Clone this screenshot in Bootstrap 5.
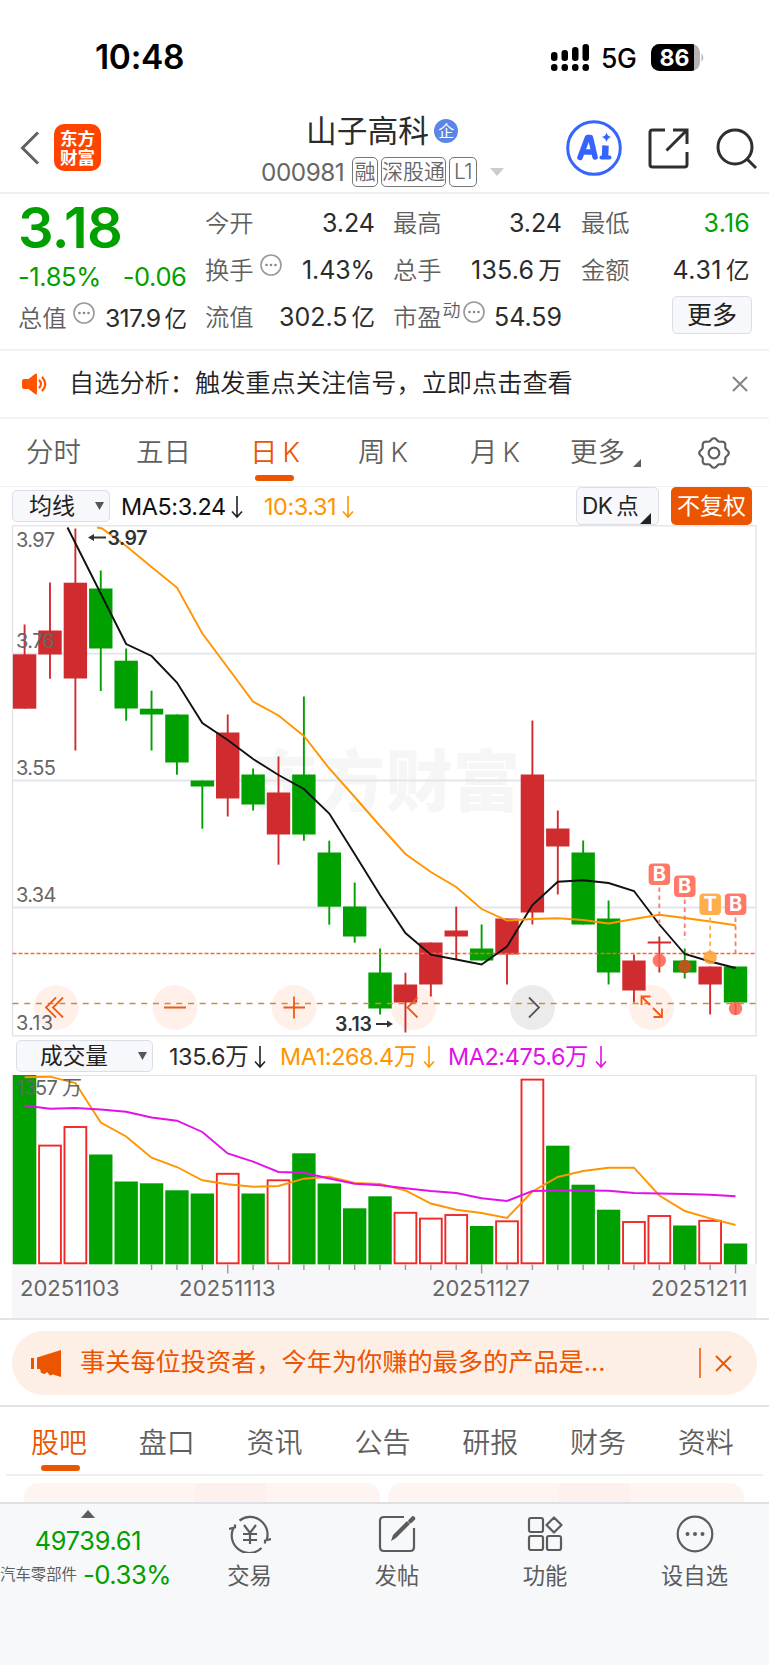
<!DOCTYPE html>
<html lang="zh-CN">
<head>
<meta charset="utf-8">
<meta name="viewport" content="width=device-width, initial-scale=1">
<title>山子高科 000981</title>
<link rel="stylesheet" href="https://cdn.jsdelivr.net/npm/bootstrap@5.3.0/dist/css/bootstrap.min.css">
<style>
:root{--up:#d02c2f;--down:#00a000;--brand:#eb5500;--ink:#2b2b2b;--dim:#5f5f5f;--soft:#f7f8fb;--edge:#e3e4e9}
body{font-family:Inter,"Noto Sans CJK SC",sans-serif;color:var(--ink);background:#fff;width:769px;height:1665px;overflow:hidden;font-size:25px;line-height:1;font-weight:400}
svg{display:block;flex:none}
.cells{display:grid;align-items:center;white-space:nowrap}
.down{color:var(--down)}
.dim{color:var(--dim)}
.thin{font-weight:350}
.status-row{height:108px;grid-template-columns:95px 455px 52px 48px 60px;font-weight:600;color:#000}
.clock{font-size:33.5px;letter-spacing:-.3px}
.head-row{height:84px;grid-template-columns:20px 34px 207px 305px 82px 68px 50px}
.logo-box{width:47px;height:47px;border-radius:10px;background:#ff4400;color:#fff;font-size:17.5px;line-height:19px;font-weight:700}
.stock-name{font-size:30.7px;letter-spacing:.1px}
.qi{width:24px;height:24px;background:#5b86e5;color:#fff;font-size:16px;margin-left:5px}
.code-no{font-size:24.3px;letter-spacing:-.45px;width:91px;color:#666}
.tag-box{border:1.5px solid #777;border-radius:5px;height:30px;font-size:21px;color:#666;font-weight:350}
.quote{height:159px;border-top:2px solid #eee;border-bottom:2px solid #f1f1f1;grid-template-columns:18px 187px 188px 188px 169px}
.price{font-size:56px;font-weight:600;letter-spacing:-.7px;line-height:50px}
.quote-col{height:156px;padding-top:6px}
.quote-col>div{height:47px}
.lbl{color:var(--dim);font-size:24.3px;font-weight:350}
.soft-btn{background:var(--soft);border:1.5px solid #dcdee6;border-radius:5px;color:#222}
.notice{height:68px;border-bottom:2px solid #f4f4f4;grid-template-columns:22px 47px 663px 30px}
.k-tabs{height:68px;border-bottom:1.5px solid #f1f1f1;grid-template-columns:26px 110px 114px 108px 112px 100px 127px 32px;font-size:27.5px;color:var(--dim);font-weight:350}
.k-tabs span span{margin-left:5px;font-size:27px}
.k-tabs .on,.sub-tabs .on{color:var(--brand);position:relative}
.k-tabs .on::after,.sub-tabs .on::after{content:"";position:absolute;width:39px;height:6.5px;border-radius:3.5px;background:var(--brand)}
.k-tabs .on::after{left:5px;top:36px}
.sub-tabs .on::after{left:10px;top:36px}
.ma-row{height:38px;grid-template-columns:12px 109px 143px 312px 95px 82px;font-size:24px}
.fs23{font-size:23.4px;letter-spacing:-.4px}
.vol-row{height:38px;grid-template-columns:16px 153px 111px 168px 200px;padding-top:1px}
.orange{color:#ff9500}.pink{color:#e012e8}
.banner-wrap{height:89px;border-bottom:2px solid var(--edge);border-top:2px solid var(--edge);padding:11px 12px}
.banner{height:64px;border-radius:32px;background:#fdeee6;color:var(--brand);grid-template-columns:19px 49px 619px 16px 24px;font-size:25.2px}
.sub-tabs{height:69px;margin:0 6px;padding-top:4px;border-bottom:2px solid #efefef;grid-template-columns:25px repeat(6,107.8px) 60px;font-size:28px;color:var(--dim);font-weight:350}
.peek{height:26px;padding:7px 25px 0 24px;gap:8px}
.peek>div{flex:1;border-radius:14px 14px 0 0;background:linear-gradient(90deg,#fef5f2 48%,#fdf0ed 48% 68%,#fef4f1 68%)}
.dock{background:#f7f8fa;height:163px;border-top:2px solid #dfe0e4;grid-template-columns:176px 147px 148px 148px 151px;align-items:start}
.dock .item{padding-top:11px;gap:12px;font-size:22.3px;color:#5c5c5c}
</style>
</head>
<body>
<div class="cells status-row">
  <i></i><span class="clock" style="padding-top:7px">10:48</span>
  <svg width="40" height="28" style="margin-top:8px"><g><rect x="1" y="8" width="6.5" height="9" rx="3"/><rect x="11.5" y="6" width="6.5" height="11" rx="3"/><rect x="22" y="3" width="6.5" height="14" rx="3"/><rect x="32.5" y="0" width="6.5" height="17" rx="3"/><rect x="1" y="20" width="6.5" height="7" rx="3"/><rect x="11.5" y="20" width="6.5" height="7" rx="3"/><rect x="22" y="20" width="6.5" height="7" rx="3"/><rect x="32.5" y="20" width="6.5" height="7" rx="3"/></g></svg>
  <span style="font-size:26.5px;font-weight:450;padding-top:9px;letter-spacing:-.3px;margin-left:-1px">5G</span>
  <svg width="56" height="29" style="margin-top:6px"><defs><clipPath id="bat"><rect x="1" y="1" width="49" height="27" rx="8.5"/></clipPath></defs><g clip-path="url(#bat)"><rect width="56" height="29" fill="#b4b4b4"/><rect width="44" height="29"/></g><path d="M51.500 10q3.500 4.500 0 9z" fill="#b4b4b4"/><text x="24.500" y="22.800" fill="#fff" font-size="23" font-weight="700" text-anchor="middle" textLength="30">86</text></svg>
</div>

<div class="cells head-row">
  <i></i>
  <svg width="20" height="36" style="margin-top:-5px"><path d="M18 2.500L2.500 18 18 33.500" fill="none" stroke="#606060" stroke-width="3"/></svg>
  <div class="logo-box d-flex flex-column align-items-center justify-content-center" style="margin-top:-5px"><span>东方</span><span>财富</span></div>
  <div style="padding-top:3px">
    <div class="d-flex align-items-center" style="margin:0 0 10px 45px"><span class="stock-name">山子高科</span><span class="qi rounded-circle d-flex align-items-center justify-content-center">企</span></div>
    <div class="d-flex align-items-center"><span class="code-no">000981</span>
      <span class="tag-box d-flex align-items-center justify-content-center" style="width:26px">融</span>
      <span class="tag-box d-flex align-items-center justify-content-center" style="width:65px;margin-left:3px">深股通</span>
      <span class="tag-box d-flex align-items-center justify-content-center" style="width:28px;margin-left:3px;letter-spacing:-.6px">L1</span>
      <svg width="14" height="8" style="margin-left:13px"><path d="M0 0h14l-7 8z" fill="#ccc"/></svg></div>
  </div>
  <svg width="56" height="56" style="margin-top:-4px"><circle cx="28" cy="28" r="26.300" fill="#fff" stroke="#3564ff" stroke-width="3"/><path d="M14 37.500L21.500 17.500h3L29 37M17 32h10" fill="none" stroke="#3564ff" stroke-width="5.500" stroke-linejoin="round" stroke-linecap="round"/><path d="M39.500 25.500l-.5 12" stroke="#3564ff" stroke-width="6.500" stroke-linecap="butt"/><path d="M35.500 37.500h8" stroke="#3564ff" stroke-width="4" stroke-linecap="round"/><path d="M40.500 12.500q1 4 5 4.500-4 .8-5 5-1-4.200-5-5 4-.5 5-4.500z" fill="#3564ff"/></svg>
  <svg width="41" height="41" style="margin-top:-4px" fill="none" stroke="#2f2f2f" stroke-width="3"><path d="M17 2H4.500Q2 2 2 4.500v32Q2 39 4.500 39h32q2.500 0 2.500-2.500V24M18.500 22.500L38 3M25 2h14v14"/></svg>
  <svg width="42" height="42" style="margin-top:-3px" fill="none" stroke="#2f2f2f" stroke-width="3"><circle cx="19" cy="19" r="17"/><path d="M31 31l9 9"/></svg>
</div>

<div class="cells quote">
  <i></i>
  <div class="quote-col" style="width:168.500px">
    <div style="height:59px;padding-top:3px" class="price down">3.18</div>
    <div class="d-flex justify-content-between align-items-center down" style="height:36px;font-size:25.500px;letter-spacing:-.4px"><span>-1.85%</span><span>-0.06</span></div>
    <div class="d-flex align-items-center"><span class="lbl">总值</span><svg width="22" height="22" style="margin:-12px 0 0 6px"><use href="#dots"/></svg><span class="ms-auto" style="font-size:24.800px;letter-spacing:-.6px">317.9<span style="margin-left:4px;font-size:22.500px">亿</span></span></div>
  </div>
  <div class="quote-col" style="width:170px">
    <div class="d-flex align-items-center"><span class="lbl">今开</span><span class="ms-auto">3.24</span></div>
    <div class="d-flex align-items-center"><span class="lbl">换手</span><svg width="22" height="22" style="margin:-12px 0 0 6px"><use href="#dots"/></svg><span class="ms-auto" style="letter-spacing:-.1px">1.43%</span></div>
    <div class="d-flex align-items-center"><span class="lbl">流值</span><span class="ms-auto">302.5<span style="margin-left:4px;font-size:23.500px">亿</span></span></div>
  </div>
  <div class="quote-col" style="width:169px">
    <div class="d-flex align-items-center"><span class="lbl">最高</span><span class="ms-auto">3.24</span></div>
    <div class="d-flex align-items-center"><span class="lbl">总手</span><span class="ms-auto" style="letter-spacing:.2px">135.6<span style="margin-left:4px;font-size:23.500px">万</span></span></div>
    <div class="d-flex align-items-center"><span class="lbl">市盈</span><span class="lbl" style="font-size:18px;margin:-14px 0 0 1px">动</span><svg width="22" height="22" style="margin:-12px 0 0 2px"><use href="#dots"/></svg><span class="ms-auto">54.59</span></div>
  </div>
  <div class="quote-col" style="width:169px">
    <div class="d-flex align-items-center"><span class="lbl">最低</span><span class="ms-auto down" style="letter-spacing:.2px">3.16</span></div>
    <div class="d-flex align-items-center"><span class="lbl">金额</span><span class="ms-auto" style="letter-spacing:.5px">4.31<span style="margin-left:4px;font-size:23.500px">亿</span></span></div>
    <div class="d-flex align-items-center justify-content-end"><span class="soft-btn d-flex align-items-center justify-content-center" style="width:80px;height:38px;margin:-5px -2px 0 0">更多</span></div>
  </div>
</div>

<div class="cells notice">
  <i></i>
  <svg width="26" height="22"><path d="M0 8q0-2 2-2h4.500L13 1q2-1.500 2 1v18q0 2.500-2 1l-6.500-5H2q-2 0-2-2z" fill="#ff5500"/><path d="M17.500 7.500q3 3.500 0 7M20.500 4.500q5.500 6.500 0 13" fill="none" stroke="#ff5500" stroke-width="2.200" stroke-linecap="round"/></svg>
  <span class="thin" style="font-size:25.200px;color:#222">自选分析：触发重点关注信号，立即点击查看</span>
  <svg width="16" height="16"><path d="M1 1l14 14M15 1L1 15" stroke="#888" stroke-width="2.200"/></svg>
</div>

<nav class="cells k-tabs">
  <i></i><span>分时</span><span>五日</span><span class="on">日<span>K</span></span><span>周<span>K</span></span><span>月<span>K</span></span>
  <span class="d-flex align-items-end">更多<svg width="8" height="8" style="margin:0 0 -1px 8px"><path d="M8 0v8H0z" fill="#5f5f5f"/></svg></span>
  <svg width="32" height="32" viewBox="-16 -16 32 32" fill="none" stroke="#5f5f5f" stroke-width="2.200" style="margin-left:1px"><circle r="5.300"/><path id="cog" stroke-linejoin="round"/></svg>
</nav>

<div class="cells ma-row">
  <i></i><span class="soft-btn d-flex align-items-center" style="width:98px;height:32px;padding-left:16px;font-size:23px">均线<svg width="9" height="8" style="margin-left:20px"><path d="M0 0h9L4.500 8z" fill="#555"/></svg></span>
  <span class="d-flex align-items-center" style="color:#111;padding-top:2px"><span class="fs23" style="width:110px">MA5:3.24</span><svg width="12" height="24"><use href="#arr" stroke="#222"/></svg></span>
  <span class="d-flex align-items-center orange" style="padding-top:2px"><span class="fs23" style="width:78px">10:3.31</span><svg width="12" height="24"><use href="#arr" stroke="#ff9500"/></svg></span>
  <span class="soft-btn d-flex align-items-center" style="width:83px;height:38px;padding-left:5px;font-size:22.500px;letter-spacing:-.6px">DK<span style="margin-left:4px">点</span><svg width="11" height="11" style="margin:24px 0 0 2px"><path d="M11 0v11H0z" fill="#222"/></svg></span>
  <span class="d-flex align-items-center justify-content-center text-white" style="width:81px;height:38px;border-radius:5px;background:var(--brand);font-size:23px">不复权</span>
</div>

<svg id="kline" width="769" height="512" viewBox="0 525 769 512"></svg>

<div class="cells vol-row">
  <i></i><span class="soft-btn d-flex align-items-center" style="width:137px;height:32px;padding-left:23px;font-size:22.700px;margin-top:-1px">成交量<svg width="9" height="8" style="margin-left:30px"><path d="M0 0h9L4.500 8z" fill="#555"/></svg></span>
  <span class="d-flex align-items-center"><span class="fs23" style="width:85px">135.6万</span><svg width="12" height="24"><use href="#arr" stroke="#222"/></svg></span>
  <span class="d-flex align-items-center orange"><span class="fs23" style="width:143px">MA1:268.4万</span><svg width="12" height="24"><use href="#arr" stroke="#ff9500"/></svg></span>
  <span class="d-flex align-items-center pink"><span class="fs23" style="width:147px">MA2:475.6万</span><svg width="12" height="24"><use href="#arr" stroke="#e012e8"/></svg></span>
</div>

<svg id="volume" width="769" height="243" viewBox="0 1075 769 243"></svg>

<div class="banner-wrap">
  <div class="cells banner">
    <i></i>
    <svg width="31" height="27" fill="#eb5500"><path d="M0 8h3v11H0zM6 7.500L30 0v27l-8-2.500-3 1-3-3.500-2 2-4-1-1-4H6z"/></svg>
    <span>事关每位投资者，今年为你赚的最多的产品是...</span>
    <svg width="2" height="30"><path d="M1 0v30" stroke="#eb5500" stroke-width="1.500"/></svg>
    <svg width="17" height="17"><path d="M1 1l15 15M16 1L1 16" stroke="#eb5500" stroke-width="1.800"/></svg>
  </div>
</div>

<nav class="cells sub-tabs"><i></i><span class="on">股吧</span><span>盘口</span><span>资讯</span><span>公告</span><span>研报</span><span>财务</span><span>资料</span></nav>
<div class="d-flex peek"><div></div><div></div></div>

<footer class="cells dock">
  <div class="d-flex flex-column align-items-center down">
    <svg width="14" height="8" style="margin-top:6px"><path d="M0 8h14L7 0z" fill="#5c5c5c"/></svg>
    <span style="font-size:25.300px;letter-spacing:-.3px;margin-top:10px">49739.61</span>
    <div class="d-flex align-items-center align-self-start" style="margin:9px 0 0 0"><span class="dim" style="font-size:15.400px;width:83px">汽车零部件</span><span style="font-size:25.700px;letter-spacing:-.5px">-0.33%</span></div>
  </div>
  <div class="item d-flex flex-column align-items-center"><svg width="42" height="38" fill="none" stroke="#5c5c5c" stroke-width="2.200"><path d="M10.500 5.500A17.500 17.500 0 0 1 37.800 24.500M36 28.500V25.500l6-1.500M32.500 33A17.500 17.500 0 0 1 4.200 13.500M6 9.500V12.500L0 14"/><path d="M15 10l6 8 6-8M14 19h14M14 25h14M21 18v11"/></svg><span>交易</span></div>
  <div class="item d-flex flex-column align-items-center"><svg width="38" height="38" fill="none" stroke="#5c5c5c" stroke-width="2.200"><path d="M26 2H6Q2 2 2 6v26q0 4 4 4h26q4 0 4-4V13"/><path d="M15 20L29 6l3 3-14 14-5 3z" fill="#5c5c5c" stroke="none"/><path d="M32.500 6l2.500-2.500" stroke-width="4.500" stroke-linecap="round"/></svg><span>发帖</span></div>
  <div class="item d-flex flex-column align-items-center"><svg width="36" height="38" fill="none" stroke="#5c5c5c" stroke-width="2.200"><rect x="2" y="3" width="14" height="14" rx="2"/><rect x="2" y="21" width="14" height="14" rx="2"/><rect x="20" y="21" width="14" height="14" rx="2"/><path d="M27 2.500l7.500 7.500-7.500 7.500-7.500-7.500z" stroke-linejoin="round"/></svg><span>功能</span></div>
  <div class="item d-flex flex-column align-items-center"><svg width="38" height="38"><circle cx="19" cy="19" r="17.300" fill="none" stroke="#5c5c5c" stroke-width="2.200"/><g fill="#5c5c5c"><circle cx="11.500" cy="19" r="2"/><circle cx="19" cy="19" r="2"/><circle cx="26.500" cy="19" r="2"/></g></svg><span>设自选</span></div>
</footer>

<svg width="0" height="0" class="position-absolute"><defs>
  <g id="dots"><circle cx="11" cy="11" r="10" fill="none" stroke="#999" stroke-width="1.600"/><g fill="#888"><circle cx="6.500" cy="11" r="1.300"/><circle cx="11" cy="11" r="1.300"/><circle cx="15.500" cy="11" r="1.300"/></g></g>
  <path id="arr" d="M6 1v21M1 16.500l5 5.500 5-5.500" fill="none" stroke-width="1.600"/>
</defs></svg>

<script src="https://cdn.jsdelivr.net/npm/bootstrap@5.3.0/dist/js/bootstrap.bundle.min.js"></script>
<script>
// Column i is centred on cx(i); values below are plot-space y coordinates.
const cx = i => 24.6 + 25.39 * i, RED = '#d02c2f', GREEN = '#00a000';
// [colour, high, body top, body bottom, low]
const candles = [['r',624.5,654.3,708.7,708.7],['r',582.5,630.5,654.5,678.7],['r',528.5,582.7,678.5,750.5],['g',570.5,588.5,648.5,691],['g',648.5,660.7,708.5,720.7],['g',690.7,708.7,714.5,750.5],['g',714.5,714.5,762.5,774.7],['g',780.5,780.5,786.5,828.7],['r',714.5,732.5,798.5,816.5],['g',768.5,774.5,804.5,810.5],['r',756.5,792.5,834.5,864.7],['g',696.5,774.5,834.5,840.7],['g',840.7,852.5,906.7,924.7],['g',882.5,906.5,936.5,942.7],['g',948.5,972.5,1008.5,1014.5],['r',972.7,984.5,1002.5,1032.5],['r',942.5,942.5,984.5,996.5],['r',906.7,930.5,936.5,960],['g',924.5,948.5,960.5,960.5],['r',918.5,918.5,954.5,984.5],['r',720.5,774.5,912.5,924.5],['r',810.5,828.5,846.5,894.5],['g',840.5,852.5,924.5,924.5],['g',900.5,918.5,972.5,984.5],['r',954.5,960.5,990.5,1002.5],['r',936.5,941.5,943.5,972.5],['g',948.5,960.5,972.5,978.5],['r',966.5,966.5,984.5,1014.5],['g',966.5,966.5,1002.5,1014.5]];
const ma5 = [644,656,682.5,723,740,759,775,789,813.5,854,895,933,954.7,959.5,964.5,946.5,905,881.7,880.3,883,891,924.5,954,961.5,968];
const ma10 = [546,567,587.5,633.5,667.5,701.7,715.5,736,768.5,797,826,854,872,887,909,920.5,919,918.3,920,923.5,919,914.7,918,921.5,925.3];
const vols = [1074.5,1145.3,1126.7,1154.5,1181.5,1183.3,1190.3,1193.5,1173.5,1193.5,1180,1153.3,1183.5,1208.3,1196.3,1212.5,1218.3,1214.7,1226,1221,1079.3,1145.7,1184.7,1209.7,1221.7,1215.7,1225.5,1220.5,1243.5];
const v1 = [1077.3,1076.7,1083,1122.5,1136.5,1157.7,1167,1180.3,1184.3,1186.7,1186,1178.7,1176.7,1183,1184,1190.5,1203.5,1209.7,1213,1218,1191.5,1177,1171,1167.7,1167.7,1195.5,1211,1218.3,1225];
const v2 = [1105.5,1108.8,1108,1109.5,1111.7,1117.5,1120.7,1132,1153.5,1161.7,1172,1172.7,1178.5,1183.8,1185.3,1188.3,1191,1193,1198.3,1201,1191,1190.5,1190.5,1190.7,1193,1193.5,1194,1194.8,1196.3];
const line = (ys, from, color, lead = '') => `<polyline fill="none" stroke="${color}" stroke-width="1.9" points="${lead} ${ys.map((y, i) => cx(i + from) + ',' + y).join(' ')}"/>`;
const label = (x, y, w, t, extra = '') => `<text x="${x}" y="${y}" textLength="${w}" font-size="20" fill="#666" ${extra}>${t}</text>`;

let k = `<text x="251" y="806" font-size="67" font-weight="900" fill="#f6f6f6" textLength="269">东方财富</text>`;
k += `<g fill="none" stroke="#e1e6eb" stroke-width="1.8"><path d="M12 653.700H756M12 780.500H756M12 907.500H756"/></g><rect x="12.500" y="525.800" width="743.500" height="510" fill="none" stroke="#e2e2e5" stroke-width="1.300"/>`;
[56,175,294,413.5,532.5,651.5].forEach((x, i) => k += `<circle cx="${x}" cy="1007.500" r="22.500" fill="${i == 4 ? '#ebebeb' : '#fff1ea'}"/>`);
candles.forEach(([c, h, a, b, l], i) => { const f = c == 'r' ? RED : GREEN, x = cx(i);
  k += `<path d="M${x} ${h}V${l}" stroke="${f}" stroke-width="1.900"/><rect x="${x - 11.7}" y="${a}" width="23.400" height="${b - a}" fill="${f}"/>`; });
k += `<path d="M12.500 953.500H756" stroke="#f26a30" stroke-width="1.600" stroke-dasharray="4 2"/><path d="M12.500 1003.500H756" stroke="#c98b45" stroke-width="1.700" stroke-dasharray="6 5.700"/>`;
k += line(ma5, 4, '#111', '67.500,527.500') + line(ma10, 4, '#ff9500', '97,527.500 102,528.500');
k += label(16,547,39,'3.97') + label(16,647.500,39,'3.76') + label(16,775,40,'3.55') + label(16,902,40.500,'3.34') + label(16,1029.500,37,'3.13');
k += `<g fill="#333" font-weight="600"><text x="107.500" y="545" font-size="19.500" textLength="40">3.97</text><text x="335" y="1031" font-size="19.500" textLength="37">3.13</text><path d="M88 537.500l6-3.500v2.600h12v1.900H94v2.600zM393 1024l-6-3.500v2.600h-11v1.900h11v2.600z"/></g>`;
k += `<g fill="none" stroke="#f05a14" stroke-width="1.800"><path d="M56 997.500l-10 10 10 10M63 997.500l-10 10 10 10M164 1007.500h22M283.500 1007.500h21.500M294 996.500v22M417.500 997.500l-10 10 10 10"/><path d="M641.500 1005v-8.500h9M641.500 996.500l8.500 8.500M653.500 1017h8.500v-8.500M662 1017l-9-9"/><path d="M529 997.500l10 10-10 10" stroke="#555"/></g>`;
[['B',25,863.5,960.5],['B',26,875.5,966.5],['T',27,893.5,957.5],['B',28,893.5,1008.5]].forEach(([t, i, y, d]) => { const x = cx(i), f = t == 'T' ? '#ffae4c' : '#ff7868', end = {25:926,26:940,27:957,28:957}[i];
  k += `<path d="M${x} ${y + 24}V${end}" stroke="${f}" stroke-width="1.800" stroke-dasharray="4.500 3.500"/><rect x="${x - 10.7}" y="${y}" width="21.500" height="21.500" rx="4" fill="${f}"/><text x="${x}" y="${y + 17.8}" fill="#fff" font-size="20" font-weight="700" text-anchor="middle">${t}</text><circle cx="${x}" cy="${d}" r="6.700" fill="${i == 26 ? '#b35a1c' : t == 'T' ? '#ff9f2f' : '#ff5f50'}" fill-opacity="${i == 26 ? 1 : .85}"/>`; });
document.getElementById('kline').innerHTML = k;

let v = `<rect x="12" y="1264" width="744.500" height="54" fill="#f7f7fa"/><path d="M12.500 1264V1075.200H756V1264" fill="none" stroke="#e2e2e5" stroke-width="1.500"/>`;
vols.forEach((y, i) => { const x = cx(i);
  const hollow = [1,2,8,10,15,16,17,19,20,24,25,27].includes(i);
  v += hollow ? `<rect x="${x - 10.9}" y="${y + .3}" width="21.800" height="${1263 - y}" fill="#fff" stroke="#f02828" stroke-width="1.900"/>` : `<rect x="${x - 11.7}" y="${y}" width="23.400" height="${1264.3 - y}" fill="${GREEN}"/>`;
  if (i > 4) v += `<path d="M${x} 1264.500V${[8,18,28].includes(i) ? 1273.5 : 1270}" stroke="#999" stroke-width="1.400"/>`; });
v += line(v1, 0, '#ff9500') + line(v2, 0, '#e012e8') + label(16,1094.500,66,'1357 万');
[[20,99.5,'20251103'],[179,96.5,'20251113'],[432,98,'20251127'],[651,96.5,'20251211']].forEach(([x, w, t]) => v += `<text x="${x}" y="1295.500" textLength="${w}" font-size="22" fill="#666">${t}</text>`);
document.getElementById('volume').innerHTML = v;

// Eight-lobed outline of the settings gear.
let g = ''; for (let a = 0; a <= 360; a += 4) { const r = 13.6 + 1.2 * Math.cos(a * Math.PI / 180 * 8), t = a * Math.PI / 180; g += (a ? 'L' : 'M') + (r * Math.cos(t)).toFixed(2) + ' ' + (r * Math.sin(t)).toFixed(2); }
document.getElementById('cog').setAttribute('d', g + 'z');
</script>
</body>
</html>
